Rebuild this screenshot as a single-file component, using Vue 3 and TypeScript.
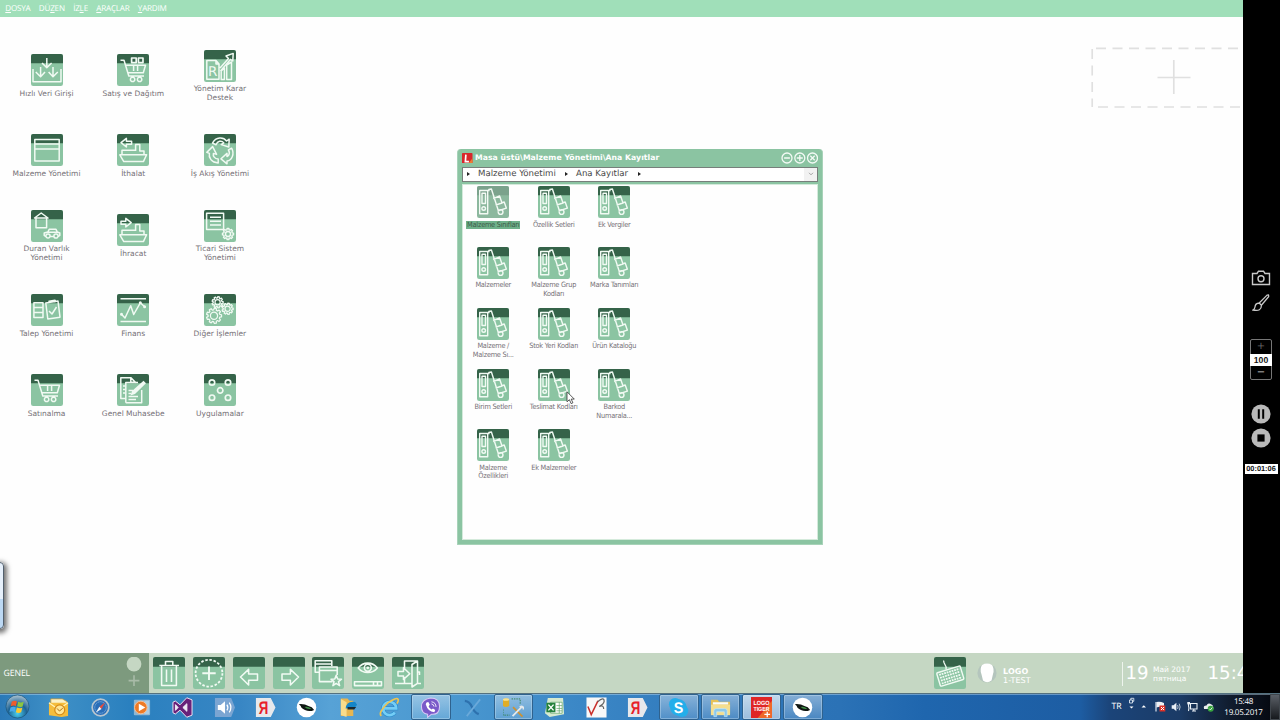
<script setup lang="ts">
interface Shape { d: string; fill?: boolean; w?: number }
interface Item { label: string[]; icon: string; selected?: boolean }

const circle = (x: number, y: number, r: number): string =>
  `M${x - r} ${y}a${r} ${r} 0 1 0 ${2 * r} 0a${r} ${r} 0 1 0 ${-2 * r} 0`

const gear = (x: number, y: number, r: number, teeth = 8): string => {
  const pts: string[] = []
  const step = (Math.PI * 2) / teeth
  for (let i = 0; i < teeth; i++) {
    const offsets: [number, number][] = [[-0.34, 0.78], [-0.2, 1], [0.2, 1], [0.34, 0.78]]
    for (const [o, k] of offsets) {
      const a = (i + o) * step
      pts.push(`${(x + Math.cos(a) * r * k).toFixed(2)} ${(y + Math.sin(a) * r * k).toFixed(2)}`)
    }
  }
  return `M${pts.join('L')}Z`
}

const cart = 'M3.5 6.3H7L11.8 22H27M8.6 11.3H28.5L26.3 18.7H10.8M16.6 12v5M20.6 12v5' + circle(15.6, 25.4, 2.2) + circle(22.6, 25.4, 2.2)
const ship = 'M2.8 20.8H29.6L26.4 27.6H6.8ZM5 20.5V16.3H18M18.6 17V10.6H22.8V17H27V20.5'

const icons: Record<string, Shape[]> = {
  entry: [{ d: 'M2 15V27.8H30V15M15.8 4V13M11 9L15.8 13.6L20.6 9M9.6 13V22M4.8 18L9.6 22.8L14 18M22 13V22M17.6 18L22 22.8L26.8 18' }],
  sales: [{ d: cart }, { d: 'M14.6 4h4.6v4.6h-4.6ZM21.4 4h4.6v4.6h-4.6Z', w: 1.7 }],
  report: [{ d: 'M12 10.6H2.8V29.2H15V14ZM12 10.6V14H15M17.2 29.5V21L20.4 18V29.5ZM22.7 29.5V15L27.5 12V29.5ZM16 18L24.5 8.5L22 6L29.2 3.4L28.8 11L26.4 9.4L16.5 21' }],
  screen: [{ d: 'M3.8 5.6H28.2V27H3.8ZM3.8 10H28.2M3.8 15H28.2' }],
  import: [{ d: ship }, { d: 'M4 8.7L9.4 4.4V7.2H14.6V10.2H9.4V13Z' }],
  cycle: [{ d: 'M8.5 9C12 2.5 19.5 2.8 22.6 7L25.2 5.2L24.8 13L17.2 10.6L19.8 8.9C17.5 6 13.5 7 12 10.8ZM27.6 14.2C31 20.5 27.5 26.5 23 27V29.8L17 24.8L23 19.4V22.5C25.5 21.4 26 18.5 24.4 16ZM14.2 29C7.5 28.7 4.4 23.5 5.4 19.4L2.8 18.4L8.6 12.6L12.6 20.4L9.4 19.4C8.8 22 10.5 24.8 14.2 25Z' }],
  assets: [{ d: 'M3.5 8L10.2 3L17 8ZM5 8V17.8H15.6V8M14.6 26.5L13.2 25.5V23L16.8 22L18.2 19.3H25L26.3 22L28.8 23V25.5L27.4 26.5M16.8 22.2H26.3M19.4 26.6H22.6' + circle(17, 26, 2.1) + circle(25, 26, 2.1) }],
  export: [{ d: ship }, { d: 'M14.2 8.7L8.8 4.4V7.2H4V10.2H8.8V13Z' }],
  system: [{ d: 'M2.6 3.2H19.6V19.6H2.6ZM6 7.3H17M6 11.2H17M6 15H17' }, { d: gear(24, 24, 5.6) + circle(24, 24, 2.5), w: 1.4 }],
  demand: [{ d: 'M2.9 8.7H12V23.5H2.9ZM2.9 13.6H12M2.9 18.5H12M14.8 9L27 7L29 23.2L16.8 25ZM18.2 9.5L18 7.2L24 6.2L24.3 8.3M18 17L21 20L25.5 13' }],
  finance: [{ d: 'M3.5 4.8H29M3.5 27.4H29M4.5 20.2L8 24L13.7 11.7L16.7 20.5L23.3 8.8L27.6 12.8' }, { d: circle(4.5, 20.2, 1.5) + circle(23.3, 8.8, 1.5) + circle(27.6, 12.8, 1.5), fill: true }],
  gears: [{ d: gear(13.6, 8.3, 5.6, 9) + circle(13.6, 8.3, 2.6) + gear(23.6, 14.8, 5.6, 9) + circle(23.6, 14.8, 2.6) + gear(10, 21.8, 7.6, 9) + circle(10, 21.8, 3.6), w: 1.25 }],
  buy: [{ d: cart }],
  ledger: [{ d: 'M9 24.6H3.8V3.8H14L19 9M13.8 4V8.2H19M8.8 28.8V8.5H21M24.7 16V28.8H8.8M6 12H8M6 15.5H8M6 19H8M11.5 16.5H16M11.5 19.5H14M11.5 22.5H21M11.5 25.5H19' }, { d: 'M13.5 21.5L15 17L26.5 6.8L29 9.2L18 20Z', fill: true }],
  apps: [{ d: circle(8, 8.5, 2.7) + circle(24, 8.5, 2.7) + circle(16.2, 16.4, 2.7) + circle(8, 23.7, 2.7) + circle(24, 23.7, 2.7), w: 1.7 }],
  truck: [{ d: 'M2.7 4.5H10.7V27.8H2.7ZM5 7.3H8.5V17.5H5ZM12 5.3L11.8 3.4L14.4 3L21.2 24.2M16.2 12.6L22.6 10L25 17L18.6 19.2M18.6 19.2L27.2 16L29.4 22.2L20.6 25' + circle(6.7, 22.5, 1.8) + circle(23.6, 26, 2.4) }],
  trash: [{ d: 'M6.3 8.4H26M8.6 8.8V28.4H23.4V8.8M12.5 8V4.4H19.8V8M13.5 12.5V25M18.5 12.5V25' }],
  arrowLeft: [{ d: 'M7.5 20L15.6 12.4V17H24.5V23.2H15.6V28Z' }],
  arrowRight: [{ d: 'M25.5 20L17.4 12.4V17H9V23.2H17.4V28Z' }],
  windows: [{ d: 'M7 15.3H3.2V3.8H19.8V9M3.2 7H19.8M20.5 24.6H7.4V10H25.2V18M7.4 13.5H25.2M24.2 18.4L25.7 22L29.5 22.2L26.5 24.7L27.6 28.6L24.2 26.4L20.9 28.6L22 24.7L19 22.2L22.8 22Z' }],
  eye: [{ d: 'M6.2 11C11 4.5 20.5 4.5 25.4 11C20.5 17 11 17 6.2 11ZM2.5 24.7H29.5V28.6H2.5ZM21.5 25V28M25.5 25V28' + circle(15.8, 10.8, 3.5) }, { d: circle(15.8, 10.8, 1.4), fill: true }],
  exit: [{ d: 'M3 26.4H12M12.5 13V4H25.5V26.4H29M12.5 20V26.4H20M25.5 4L20 7.5V30L25.5 26.4M25.5 15H27.5V18M6 14.4H11.5V10.8L17.8 16.7L11.5 22.4V19H6Z' }],
}

const desktop: Item[] = [
  { label: ['Hızlı Veri Girişi'], icon: 'entry' },
  { label: ['Satış ve Dağıtım'], icon: 'sales' },
  { label: ['Yönetim Karar', 'Destek'], icon: 'report' },
  { label: ['Malzeme Yönetimi'], icon: 'screen' },
  { label: ['İthalat'], icon: 'import' },
  { label: ['İş Akış Yönetimi'], icon: 'cycle' },
  { label: ['Duran Varlık', 'Yönetimi'], icon: 'assets' },
  { label: ['İhracat'], icon: 'export' },
  { label: ['Ticari Sistem', 'Yönetimi'], icon: 'system' },
  { label: ['Talep Yönetimi'], icon: 'demand' },
  { label: ['Finans'], icon: 'finance' },
  { label: ['Diğer İşlemler'], icon: 'gears' },
  { label: ['Satınalma'], icon: 'buy' },
  { label: ['Genel Muhasebe'], icon: 'ledger' },
  { label: ['Uygulamalar'], icon: 'apps' },
]

const records: Item[] = [
  ['Malzeme Sınıfları'], ['Özellik Setleri'], ['Ek Vergiler'],
  ['Malzemeler'], ['Malzeme Grup', 'Kodları'], ['Marka Tanımları'],
  ['Malzeme /', 'Malzeme Sı...'], ['Stok Yeri Kodları'], ['Ürün Kataloğu'],
  ['Birim Setleri'], ['Teslimat Kodları'], ['Barkod', 'Numarala...'],
  ['Malzeme', 'Özellikleri'], ['Ek Malzemeler'],
].map((label, i) => ({ label, icon: 'truck', selected: i === 0 }))

const menus: [string, string, string][] = [
  ['', 'D', 'OSYA'], ['DÜ', 'Z', 'EN'], ['İZ', 'L', 'E'], ['', 'A', 'RAÇLAR'], ['', 'Y', 'ARDIM'],
]
const tools = ['trash', 'add', 'arrowLeft', 'arrowRight', 'windows', 'eye', 'exit']
const keyRows = [0, 1, 2, 3]

const tasks: { name: string; open?: boolean; active?: boolean }[] = [
  { name: 'outlook' }, { name: 'compass' }, { name: 'media' }, { name: 'studio' }, { name: 'sound' },
  { name: 'ya' }, { name: 'bird' }, { name: 'folder' }, { name: 'ie' }, { name: 'viber', open: true },
  { name: 'xtool' }, { name: 'dbtool', open: true }, { name: 'excel' }, { name: 'vr' }, { name: 'ya' },
  { name: 'skype', open: true }, { name: 'explorer', open: true }, { name: 'tiger', open: true, active: true },
  { name: 'bird', open: true },
]
</script>

<template>
  <div class="screen">
    <div class="upper">
      <div class="workspace">
        <nav class="menubar">
          <span v-for="m in menus" :key="m.join('')">{{ m[0] }}<u>{{ m[1] }}</u>{{ m[2] }}</span>
        </nav>

        <main class="canvas">
          <div class="shortcuts">
            <div v-for="it in desktop" :key="it.icon" class="shortcut">
              <svg class="tile" viewBox="0 0 32 32">
                <rect class="tile-body" width="32" height="32" rx="2.2" />
                <path class="tile-head" d="M0 9.2V2.2Q0 0 2.2 0H29.8Q32 0 32 2.2V9.2Z" />
                <path v-for="(s, i) in icons[it.icon]" :key="i" :d="s.d" :class="s.fill ? 'solid' : 'line'" :stroke-width="s.w ?? 1.5" />
                <text v-if="it.icon === 'report'" class="r-mark" x="4.1" y="25.8">R</text>
              </svg>
              <div class="caption"><div v-for="l in it.label" :key="l">{{ l }}</div></div>
            </div>
          </div>

          <svg class="dropzone" viewBox="0 0 153 64">
            <path d="M6 3.4H153M8 62H153" stroke-dasharray="10 6.5" />
            <path d="M2.2 4V62" stroke-dasharray="10 6.5" />
            <path d="M67.5 32.5H100.5M83.8 15V49" />
          </svg>

          <div class="side-tab"></div>

          <section class="window">
            <header class="titlebar">
              <svg class="logo" viewBox="0 0 10 10"><rect width="10" height="10" rx=".6" fill="#d8262c" /><path d="M6 10L10 5V10Z" fill="#f07a32" /><path d="M3.7 1.6L3.2 8.2H6.6" fill="none" stroke="#fff" stroke-width="1.6" /></svg>
              <h1>Masa üstü\Malzeme Yönetimi\Ana Kayıtlar</h1>
              <svg class="controls" viewBox="0 0 37 12">
                <circle cx="6" cy="6" r="5" /><circle cx="18.8" cy="6" r="5" /><circle cx="31.5" cy="6" r="5" />
                <path d="M3.1 6H8.9M15.8 6H21.8M18.8 3V9M29.3 3.8L33.7 8.2M33.7 3.8L29.3 8.2" />
              </svg>
            </header>
            <div class="crumbs">
              <i class="tri"></i><span class="crumb-a">Malzeme Yönetimi</span><i class="tri"></i><span class="crumb-b">Ana Kayıtlar</span><i class="tri"></i>
              <span class="drop"><svg viewBox="0 0 6 4"><path d="M1 .8L3 2.8L5 .8" /></svg></span>
            </div>
            <div class="records">
              <div v-for="(it, n) in records" :key="n" class="record" :class="{ selected: it.selected }">
                <svg class="tile" viewBox="0 0 32 32">
                  <rect class="tile-body" width="32" height="32" rx="2.2" />
                  <path class="tile-head" d="M0 9.2V2.2Q0 0 2.2 0H29.8Q32 0 32 2.2V9.2Z" />
                  <path v-for="(s, i) in icons[it.icon]" :key="i" :d="s.d" class="line" stroke-width="1.4" />
                </svg>
                <div class="caption"><div v-for="l in it.label" :key="l">{{ l }}</div></div>
              </div>
            </div>
          </section>

          <svg class="cursor" viewBox="0 0 9 14"><path d="M1 .8V10.8L3.4 8.7L5.1 12.6L6.9 11.8L5.2 8.1H8.3Z" fill="#fff" stroke="#333" stroke-width=".8" /></svg>
        </main>

        <footer class="dock">
          <div class="space">
            <span class="space-name">GENEL</span>
            <svg class="pager" viewBox="0 0 16 32"><circle cx="8" cy="7" r="7.4" fill="#c5d7c3" /><path d="M2.6 23.6H13.4M8 18.2V29" stroke="#a9bba8" stroke-width="1.6" /></svg>
          </div>
          <div class="tools">
            <svg v-for="t in tools" :key="t" class="tile" viewBox="0 0 32 32">
              <rect class="tile-body" width="32" height="32" rx="2.2" />
              <path class="tile-head" d="M0 9.7V2.2Q0 0 2.2 0H29.8Q32 0 32 2.2V9.7Z" />
              <template v-if="t === 'add'">
                <circle class="line" cx="16" cy="16.2" r="13.4" stroke-width="1.8" stroke-dasharray="2.5 1.71" />
                <path class="line" d="M9.3 16.2H22.7M16 9.5V22.9" stroke-width="1.9" />
              </template>
              <path v-for="(s, i) in icons[t] ?? []" :key="i" :d="s.d" :class="s.fill ? 'solid' : 'line'" stroke-width="1.55" />
            </svg>
          </div>
          <div class="session">
            <svg class="tile" viewBox="0 0 32 32">
              <rect class="tile-body" width="32" height="32" rx="2.2" />
              <path class="tile-head" d="M0 9.7V2.2Q0 0 2.2 0H29.8Q32 0 32 2.2V9.7Z" />
              <path class="line" d="M10 3.5C8 6 13.5 7.5 12 12.5" stroke-width="1.3" />
              <g transform="rotate(-17 16 19)">
                <rect class="line" x="4" y="12.2" width="24.5" height="14" rx="1" stroke-width="1.4" />
                <path v-for="r in keyRows" :key="r" class="line" :d="`M6 ${14.8 + r * 3}H27`" stroke-width="1.8" stroke-dasharray="1.8 .8" />
              </g>
            </svg>
            <svg class="avatar" viewBox="0 0 20 22"><circle cx="10" cy="11" r="9.6" fill="#b4c5bd" /><path d="M5 3Q10 .2 15 3Q17.6 7 16 12L14.5 18.5Q10 22 6 18.5L4.4 12Q2.6 7 5 3Z" fill="#fff" /></svg>
            <div class="user"><b>LOGO</b><span>1-TEST</span></div>
          </div>
          <div class="calendar">
            <span class="day">19</span>
            <div class="month"><span>Май 2017</span><span>пятница</span></div>
            <span class="time">15:48</span>
          </div>
        </footer>
      </div>

      <aside class="recorder">
        <svg class="camera" viewBox="0 0 20 16"><path d="M1.5 3.5H6L7.5 1.2H12.5L14 3.5H18.5V14.5H1.5Z" /><circle cx="10" cy="8.8" r="3" /></svg>
        <svg class="brush" viewBox="0 0 18 18"><path d="M7.2 9L14.8 1.4Q17-.2 16.6 2.6L9.4 11.2ZM7.2 9Q3.2 9.2 3 13Q2.6 15.3 1 16Q9.6 18 9.4 11.2Z" /></svg>
        <div class="zoomer"><span class="plus">+</span><b>100</b><span>−</span></div>
        <svg class="round" viewBox="0 0 20 20"><circle cx="10" cy="10" r="9.6" /><path d="M6.8 5.3H8.8V14.7H6.8ZM11.2 5.3H13.2V14.7H11.2Z" /></svg>
        <svg class="round stop" viewBox="0 0 20 20"><circle cx="10" cy="10" r="9.6" /><path d="M6.4 6.4H13.6V13.6H6.4Z" /></svg>
        <div class="elapsed">00:01:06</div>
      </aside>
    </div>

    <div class="taskbar">
      <div class="start">
        <svg viewBox="0 0 26 26">
          <defs><radialGradient id="orb" cx=".5" cy=".8" r=".8"><stop offset="0" stop-color="#4bd0f0" /><stop offset=".5" stop-color="#1d6395" /><stop offset="1" stop-color="#b0c5d2" /></radialGradient></defs>
          <circle cx="13" cy="13" r="12" fill="url(#orb)" stroke="#1c587f" stroke-width=".8" />
          <path d="M7 8Q10 6.3 12.4 7.7L11.4 12.5Q9 11.4 6 12.8Z" fill="#ee5c2c" /><path d="M13.6 8Q16.5 9.5 19.5 8L18.3 13Q15.5 14.3 12.6 12.8Z" fill="#8cc63f" />
          <path d="M5.7 14Q8.5 12.6 11.1 13.8L10 18.7Q7.5 17.4 4.7 18.7Z" fill="#49a9ec" /><path d="M12.4 14.1Q15 15.5 18 14.2L16.8 19Q14 20.5 11.3 19Z" fill="#fdc92e" />
        </svg>
      </div>
      <div class="tasks">
        <div v-for="(t, i) in tasks" :key="i" class="task" :class="{ open: t.open, active: t.active }">
          <svg viewBox="0 0 22 22">
            <g v-if="t.name === 'outlook'"><path d="M3 2H15L20 5V17H3Z" fill="#fbf2c8" stroke="#dca130" stroke-width=".8" /><path d="M1 6H21V20L14 21L1 19Z" fill="#f4bd3d" /><path d="M1 6L11 13L21 6" stroke="#fff3b8" stroke-width="1.3" fill="none" /><circle cx="12.3" cy="13.5" r="5.2" fill="#ffe695" stroke="#d68b17" stroke-width="1.3" /><path d="M9.5 12L12 14.7L15.5 11.7" fill="none" stroke="#a86a12" /></g>
            <g v-else-if="t.name === 'compass'"><circle cx="11" cy="11" r="8.7" fill="#2a6eb8" stroke="#b7c5cf" stroke-width="1.8" /><circle cx="11" cy="11" r="6" fill="none" stroke="#a2c9ec" stroke-width="1" stroke-dasharray="1 1.3" /><path d="M16 5.5L12 12.5L9.8 10.2Z" fill="#e54b3d" /><path d="M6 16.5L9.8 10.2L12 12.5Z" fill="#f3f7fa" /></g>
            <g v-else-if="t.name === 'media'"><rect x="3" y="3" width="17" height="16" rx="1" fill="#8db7d5" /><rect x="14" y="4" width="5" height="14" fill="#a9cce5" /><circle cx="10.3" cy="11" r="6.6" fill="#ed7a26" stroke="#f6c197" stroke-width="1" /><path d="M8.2 7V15L15 11Z" fill="#fff" /></g>
            <g v-else-if="t.name === 'studio'"><path fill-rule="evenodd" d="M15.5 .8L21 3V19L15.5 21.2L8.4 13.8L3.5 17.8L1 16.5V5.5L3.5 4.2L8.4 8.2ZM3.6 8V14L6.4 11ZM15.6 7L11.4 11L15.6 15Z" fill="#68217a" stroke="#f2e8f5" stroke-width="1" /><path d="M3.6 8L6.4 11L3.6 14ZM15.6 7L11.4 11L15.6 15Z" fill="#f2eaf5" /></g>
            <g v-else-if="t.name === 'sound'"><path d="M1 1H18L22 11L18 21H1Z" fill="#7ba5d2" /><path d="M4 8.5H7L11.5 4.5V17.5L7 13.5H4Z" fill="#fff" /><path d="M13.5 8Q15.5 11 13.5 14M16 6Q19.5 11 16 16" fill="none" stroke="#fff" stroke-width="1.3" /></g>
            <g v-else-if="t.name === 'ya'"><path d="M1 1H16.5L21.5 11L16.5 21H1Z" fill="#e7e8eb" /><text x="4" y="18" fill="#e8202a" font-size="19" font-weight="700" textLength="10" lengthAdjust="spacingAndGlyphs">Я</text></g>
            <g v-else-if="t.name === 'bird'"><circle cx="11" cy="11" r="10.2" fill="#fff" /><path d="M3 7.5Q9 7 13 9.4Q17 10 19 13.5Q14 16 9.4 13.6Q5 11.5 5 9.5Z" fill="#101713" /><path d="M9 10.4Q12.5 9.5 16 12.3Q12 13.5 9 10.4Z" fill="#3f8e45" /></g>
            <g v-else-if="t.name === 'folder'"><path d="M3 1.5H10L12 4H16V20H3Z" fill="#e7b651" /><path d="M3 2L9 5.5V21L3 18.8Z" fill="#f9dc8c" /><path d="M8 12Q9 3.5 18 5.2L20 8Q17 13 12.5 11.5Z" fill="#1585c8" /><path d="M10 10.5H19L17 13H10Z" fill="#1a2830" /></g>
            <g v-else-if="t.name === 'ie'"><path d="M5.6 12H18A6.9 6.9 0 1 0 16.6 16.2" fill="none" stroke="#2386c7" stroke-width="4" /><path d="M5.6 12H18A6.9 6.9 0 1 0 16.6 16.2" fill="none" stroke="#74cdf6" stroke-width="2.9" /><path d="M2.5 19.8Q-1.5 17 9 6.5Q18.5-.5 20 2.5Q20.6 4.2 18.8 7" fill="none" stroke="#f0c44e" stroke-width="1.7" /></g>
            <g v-else-if="t.name === 'viber'"><path d="M11 1Q20.5 1 20.5 10T12 18L8 21.3V18Q1.5 17.5 1.5 10T11 1Z" fill="#7a59c9" stroke="#d9caf5" stroke-width="1.1" /><path d="M6.8 5.8L8.7 5.3L10.3 8.2L9 9.6Q9.7 12 12.2 13.2L13.6 12L16 13.7L15 16Q8.2 15.4 6 7.6Z" fill="#fff" /><path d="M12 5Q16.7 5.7 16.8 10.4M12 7.2Q14.5 7.7 14.7 10" fill="none" stroke="#fff" stroke-width=".9" /></g>
            <g v-else-if="t.name === 'xtool'"><path d="M3 4Q8 4.5 10.4 10.4T17.5 18" fill="none" stroke="#2d71ae" stroke-width="2.4" /><path d="M19 2.5L5 20" stroke="#6aa9da" stroke-width="1.8" /></g>
            <g v-else-if="t.name === 'dbtool'"><path d="M0 2.5Q3 .5 6.5 2.5V9.5Q3 11.5 0 9.5Z" fill="#e0ad27" /><ellipse cx="3.2" cy="2.7" rx="3.3" ry="1.3" fill="#fae28c" /><path d="M9 2H18V8M0 13V19H7" fill="none" stroke="#358252" stroke-dasharray="1.5 1" /><path d="M10.5 10.5L20.5 20.5" stroke="#cd9232" stroke-width="1.8" /><path d="M20 10L10 20M17.5 10.5Q21.5 8.5 21.5 13" fill="none" stroke="#e3e8eb" stroke-width="1.9" /></g>
            <g v-else-if="t.name === 'excel'"><path d="M4 1H20L21 18L6 21L1 17Z" fill="#d6ead0" /><path d="M7 5.5H19V17H7Z" fill="#fff" stroke="#58a162" stroke-width=".7" /><path d="M13 9H19M13 12H19M13 14.5H19M16 5.5V17" stroke="#58a162" stroke-width=".7" /><rect x="2.5" y="6" width="9.5" height="10" fill="#24813c" /><path d="M4.6 8L10 14M10 8L4.6 14" stroke="#fff" stroke-width="1.5" /></g>
            <g v-else-if="t.name === 'vr'"><rect x=".5" y=".5" width="21" height="21" fill="#f8f8f8" /><path d="M2 10L5.5 18.5L12.5 4" fill="none" stroke="#c9302c" stroke-width="1.6" /><path d="M12.2 5Q19-1 19 4.6Q18.5 7.6 13.8 10Q18.7 8 18.5 12.5" fill="none" stroke="#666" stroke-width="1.3" /></g>
            <g v-else-if="t.name === 'skype'"><circle cx="7.5" cy="7.5" r="6.5" fill="#24aeea" /><circle cx="14.7" cy="14.5" r="6.5" fill="#24aeea" /><circle cx="11" cy="11" r="8.7" fill="#24aeea" /><text x="6" y="16.8" fill="#fff" font-size="16" font-weight="700" textLength="10" lengthAdjust="spacingAndGlyphs">S</text></g>
            <g v-else-if="t.name === 'explorer'"><path d="M1 3H8L9.5 5H21V18H1Z" fill="#e6c156" /><path d="M3 5.5H19V8H3Z" fill="#f7fbfc" /><path d="M1 8H21V19H1Z" fill="#f5de8e" /><path d="M4 20.5V14.5Q4 12 7 12H15.5Q18 12 18 14.5V20.5H15V15.5H7V20.5Z" fill="#8cc9ec" stroke="#d2eefa" stroke-width=".6" /></g>
            <g v-else><rect width="22" height="22" fill="#df2626" /><path d="M22 4V22H7Z" fill="#ef692a" /><text x="2.5" y="8.6" fill="#fff" font-size="6.4" font-weight="700" textLength="17" lengthAdjust="spacingAndGlyphs">LOGO</text><text x="2.5" y="14.8" fill="#fff" font-size="6.2" font-weight="700" textLength="17" lengthAdjust="spacingAndGlyphs">TIGER</text><path d="M14 18.3H20M17 15.5V21.2" stroke="#fff" stroke-width="1.3" /></g>
          </svg>
        </div>
      </div>
      <div class="tray">
        <span class="lang">TR</span>
        <svg class="tray-icons" viewBox="0 0 90 20">
          <path d="M3.5 3H6.5V6H3.5ZM4.8 3V1.3H7.8V4.3H6.5" fill="none" stroke="#dce6f1" stroke-width=".9" /><path d="M3.5 9.5H7.5L5.5 11.5Z M15.5 10.5H20L17.8 8.2Z" fill="#fff" />
          <path d="M30 5V14.5" stroke="#dde5ee" stroke-width="1.2" /><path d="M30.5 5Q34 4 38 6V10.5Q34 9 30.5 10.5Z" fill="#edf1f5" /><rect x="33.5" y="8.5" width="5.8" height="6" fill="#dc3228" /><path d="M35 10L38 13M38 10L35 13" stroke="#fff" />
          <path d="M45.7 8.3H47.5L50.4 5.7V14.3L47.5 11.8H45.7Z" fill="#e8eef5" /><path d="M51.6 8Q52.6 10 51.6 12M53.2 6.7Q55 10 53.2 13.3" fill="none" stroke="#dce6ef" stroke-width=".8" />
          <path d="M64.5 6.5H71V12H64.5ZM66 14H70M67.8 12V14M62.5 6V9Q63.5 11 62.5 14" fill="none" stroke="#eaf0f6" stroke-width="1.1" /><path d="M61.3 5H64V7.4H61.3Z" fill="#eaf0f6" />
          <path d="M78 11.5Q77 8.5 80.5 8.5Q82 5 85.5 7.5Q87.5 8 87.3 12H78Z" fill="#e8edef" /><circle cx="84.7" cy="11.7" r="3" fill="#39a53f" /><path d="M83.2 11.7L84.4 12.9L86.3 10.5" fill="none" stroke="#fff" stroke-width=".8" />
        </svg>
        <div class="clock"><span>15:48</span><span>19.05.2017</span></div>
        <div class="peek"></div>
      </div>
    </div>
  </div>
</template>

<style>
html, body { margin: 0; overflow: hidden; }
</style>

<style scoped>
.screen { width: 1280px; height: 720px; display: flex; flex-direction: column; overflow: hidden; font-family: "DejaVu Sans", Verdana, sans-serif; background: #fff; text-rendering: geometricPrecision; }
.screen * { box-sizing: border-box; }
.screen svg { display: block; flex: none; }
.upper { display: flex; height: 693px; }
.workspace { width: 1243px; height: 693px; display: flex; flex-direction: column; overflow: hidden; }
.menubar { height: 17px; flex: none; background: #a0dfb9; color: #fff; display: flex; gap: 8.4px; padding-left: 5.3px; font: 8.1px/17px "Open Sans", sans-serif; letter-spacing: -.22px; white-space: nowrap; }
.menubar u { text-underline-offset: 1px; text-decoration-thickness: .7px; }
.canvas { position: relative; height: 636px; flex: none; background: #fefefe; }
.shortcuts { padding: 19px 0 0 3.2px; display: grid; grid-template-columns: repeat(3, 86.7px); grid-auto-rows: 80px; align-items: center; justify-items: center; }
.shortcut, .record { display: flex; flex-direction: column; align-items: center; }
.tile { width: 32px; height: 32px; }
.tile-body { fill: #8bc4a2; }
.tile-head { fill: #356349; }
.line { fill: none; stroke: #f1faf3; stroke-linejoin: round; }
.solid { fill: #f1faf3; }
.r-mark { fill: #f1faf3; font-size: 13.5px; }
.caption { margin-top: 3px; font-size: 7.5px; line-height: 8.67px; color: #757076; text-align: center; white-space: nowrap; }
.shortcut .caption { padding-top: .5px; margin-bottom: -.5px; }
.dropzone { position: absolute; left: 1090px; top: 28px; width: 153px; height: 64px; fill: none; stroke: #e0e0e0; stroke-width: 1.7; }
.side-tab { position: absolute; left: -6px; top: 545px; width: 10px; height: 67px; border: 1px solid #52606e; border-radius: 4px; background: linear-gradient(#e6f0fb 0 55%, #bcd8f3 56%); box-shadow: 1px 2px 5px 2px rgba(0, 0, 0, .55); }
.window { position: absolute; left: 457px; top: 132px; width: 366px; height: 396px; background: #8bc4a2; border-radius: 4px 4px 1px 1px; display: flex; flex-direction: column; border: 1px solid #a7d2b8; border-top: 0; padding: 0 4px 4px; }
.titlebar { height: 17.5px; flex: none; display: flex; align-items: center; }
.logo { width: 10.5px; height: 10.5px; }
.titlebar h1 { flex: 1; margin: 0 0 0 2.5px; font-size: 7.7px; line-height: 16px; color: #fff; font-weight: 700; letter-spacing: .06px; white-space: nowrap; }
.controls { width: 37px; height: 12px; fill: none; stroke: #f3faf5; stroke-width: 1.3; }
.crumbs { height: 15.5px; flex: none; background: #fff; border: 1px solid #777f7b; display: flex; align-items: center; padding-left: 4px; font-size: 8.6px; color: #4a4a4a; white-space: nowrap; }
.tri { width: 0; height: 0; border: 2.3px solid transparent; border-left: 3px solid #222; border-right: 0; flex: none; }
.crumb-a { width: 78px; margin: 0 9px 0 8px; }
.crumb-b { width: 53px; margin: 0 9px 0 8px; }
.drop { margin-left: auto; width: 13px; height: 13px; background: #f2f2f2; display: flex; align-items: center; justify-content: center; }
.drop svg { width: 6px; height: 4px; fill: none; stroke: #999; stroke-width: .9; }
.records { flex: 1; margin-top: 1.5px; background: #fefefe; border: 1px solid #d4eadb; padding: 1.7px 0 0 0; display: grid; grid-template-columns: repeat(3, 60.5px); grid-auto-rows: 60.8px; }
.record .caption { margin-top: 2.4px; font-family: "DejaVu Sans Condensed", "DejaVu Sans", sans-serif; font-stretch: condensed; font-size: 7.3px; letter-spacing: -.23px; }
.selected .tile { opacity: .82; }
.selected .tile-head { fill: #5f8f74; }
.selected .tile-body { fill: #74a98a; }
.selected .caption { background: #6fb18a; color: #3d5a49; padding: 0 1px; }
.cursor { position: absolute; left: 565.5px; top: 373.5px; width: 9px; height: 14px; }
.dock { height: 40px; flex: none; background: #c5d7c3; display: flex; color: #fff; white-space: nowrap; }
.space { width: 149px; background: #7d9a7e; display: flex; align-items: center; padding: 0 7px 0 3.5px; justify-content: space-between; }
.space-name { font: 8.7px "Open Sans", sans-serif; letter-spacing: -.1px; }
.pager { width: 16px; height: 32px; }
.tools { display: flex; gap: 7.85px; padding: 4px 0 0 4px; width: 785px; flex: none; }
.session { display: flex; padding-top: 4px; width: 187.5px; flex: none; }
.avatar { width: 20px; height: 22px; margin: 5px 0 0 11px; }
.user { display: flex; flex-direction: column; margin: 9.5px 0 0 6px; font-size: 8px; line-height: 9.7px; letter-spacing: .1px; }
.calendar { display: flex; height: 24px; margin-top: 9px; border-left: 1px solid #eef4ed; flex: 1; overflow: hidden; }
.day, .time { flex: none; font-size: 18.2px; line-height: 24px; }
.day { width: 24px; margin-left: 3px; }
.month { display: flex; flex-direction: column; flex: none; width: 54.5px; margin-left: 3.5px; padding-top: 2.5px; font-size: 7.5px; line-height: 9px; }
.recorder { width: 37px; background: #000; display: flex; flex-direction: column; align-items: center; padding: 270px 1px 0 0; }
.camera { width: 20px; height: 16px; fill: none; stroke: #c9c9c9; stroke-width: 1.4; }
.camera + .brush { width: 18px; height: 18px; margin-top: 8px; fill: none; stroke: #c9c9c9; stroke-width: 1.3; }
.zoomer { width: 22px; height: 41px; margin-top: 27px; border: 1px solid #777; border-radius: 2px; color: #ccc; display: flex; flex-direction: column; text-align: center; font-size: 10px; line-height: 13px; }
.zoomer b { background: #fff; color: #111; margin: 0 -1px; font: 700 8.6px/12px "Liberation Sans", sans-serif; }
.plus { color: #666; line-height: 14px; }
.round { width: 20px; height: 20px; margin-top: 23.5px; fill: #b9b9b9; }
.round path { fill: #000; }
.stop { margin-top: 4px; }
.elapsed { margin-top: 16px; width: 33px; height: 10px; background: #fff; color: #111; text-align: center; font: 700 7.4px/10px "Liberation Sans", sans-serif; }
.taskbar { height: 27px; flex: none; border-top: 1px solid #54717f; box-shadow: inset 0 1px 0 rgba(190, 220, 240, .45); display: flex; background: linear-gradient(90deg, #2a79b8 0, #3f90c6 55px, #2a80bf 130px, #3886c4 240px, #57a2d6 330px, #4a98d0 450px, #3b87c6 580px, #2f78bb 720px, #2b72b6 840px, #1f66ae 925px, #1d5da3 1080px, #1b4479 1110px, #1b3b66 1180px, #101b2c 1232px, #060a12 1270px); }
.start { width: 38.3px; padding: 0 0 0 5px; }
.start svg { width: 25px; height: 25px; }
.tasks { display: flex; }
.task { width: 41.33px; height: 26px; display: flex; align-items: center; justify-content: center; font-family: "Liberation Sans", sans-serif; }
.task svg { width: 21px; height: 21px; }
.open { width: 39.33px; margin: 0 1px; border: 1px solid #2f628e; border-radius: 2px; background: linear-gradient(rgba(255, 255, 255, .42), rgba(255, 255, 255, .14)); box-shadow: inset 0 0 0 1px rgba(220, 238, 250, .34); }
.active { background: linear-gradient(#c3d9ec, #9bbddd); }
.tray { margin-left: auto; display: flex; color: #fff; font-family: "Open Sans", sans-serif; }
.lang { font-size: 8.7px; line-height: 24px; width: 13px; }
.tray-icons { width: 90px; height: 20px; margin: 3px 0 0 1px; }
.clock { width: 41px; margin-left: 7.5px; text-align: center; display: flex; flex-direction: column; font-size: 8px; line-height: 11px; padding-top: 2px; letter-spacing: -.25px; white-space: nowrap; }
.peek { width: 10px; height: 26px; margin-left: 6px; border: 1px solid #40464c; background: linear-gradient(#5b6067, #16191d); }
</style>
